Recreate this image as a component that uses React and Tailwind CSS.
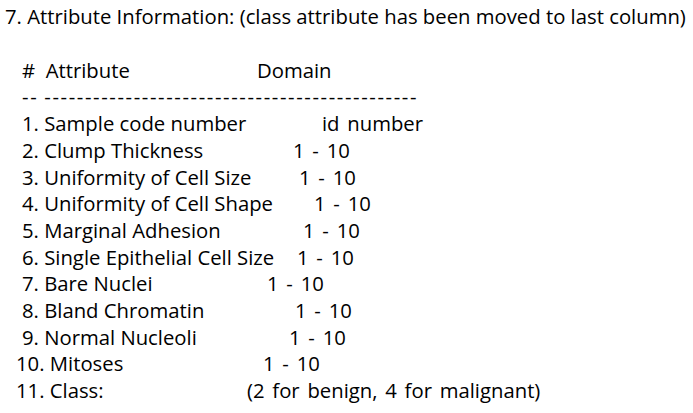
export default function App() {
  const rows = [
    ["1. Sample code number", "id number", "w-[300px]", "pl-[22px]"],
    ["2. Clump Thickness", "1 - 10", "w-[271px]", "pl-[22px]"],
    ["3. Uniformity of Cell Size", "1 - 10", "w-[277px]", "pl-[22px]"],
    ["4. Uniformity of Cell Shape", "1 - 10", "w-[292px]", "pl-[22px]"],
    ["5. Marginal Adhesion", "1 - 10", "w-[281px]", "pl-[22px]"],
    ["6. Single Epithelial Cell Size", "1 - 10", "w-[275px]", "pl-[22px]"],
    ["7. Bare Nuclei", "1 - 10", "w-[245px]", "pl-[22px]"],
    ["8. Bland Chromatin", "1 - 10", "w-[273px]", "pl-[22px]"],
    ["9. Normal Nucleoli", "1 - 10", "w-[267px]", "pl-[22px]"],
    ["10. Mitoses", "1 - 10", "w-[247px]", "pl-[16px]"],
    ["11. Class:", "(2 for benign, 4 for malignant)", "w-[231px]", "pl-[16px]"],
  ];
  return (
    <div className="w-[693px] h-[413px] pt-[3px] bg-white text-black overflow-hidden text-[20.3px] leading-[26.7px] whitespace-nowrap" style={{ fontFamily: '"Open Sans", "Noto Sans", sans-serif' }}>
      <div className="pl-[5px]">7. Attribute Information: (class attribute has been moved to last column)</div>
      <div className="mt-[27px] pl-[22px] flex">
        <span className="w-[235px]">#&nbsp;&nbsp;Attribute</span>
        <span>Domain</span>
      </div>
      <div className="pl-[22px] flex tracking-[1.6px]">
        <span>--</span>
        <span className="ml-[6px]">{"-".repeat(46)}</span>
      </div>
      {rows.map(([a, b, w, pl]) => (
        <div key={a} className={`flex ${pl}`}>
          <span className={w}>{a}</span>
          <span className="[word-spacing:2.5px]">{b}</span>
        </div>
      ))}
    </div>
  );
}
